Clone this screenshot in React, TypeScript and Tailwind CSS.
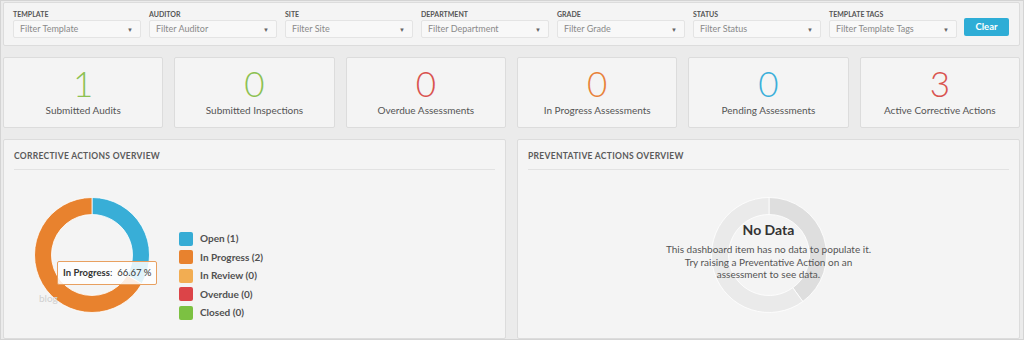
import React from 'react';

const filters = [
  { label: 'Template', placeholder: 'Filter Template' },
  { label: 'Auditor', placeholder: 'Filter Auditor' },
  { label: 'Site', placeholder: 'Filter Site' },
  { label: 'Department', placeholder: 'Filter Department' },
  { label: 'Grade', placeholder: 'Filter Grade' },
  { label: 'Status', placeholder: 'Filter Status' },
  { label: 'Template Tags', placeholder: 'Filter Template Tags' },
];

const stats = [
  { value: '1', label: 'Submitted Audits', color: 'text-[#8cc152]' },
  { value: '0', label: 'Submitted Inspections', color: 'text-[#8cc152]' },
  { value: '0', label: 'Overdue Assessments', color: 'text-[#d9534f]' },
  { value: '0', label: 'In Progress Assessments', color: 'text-[#e8823a]' },
  { value: '0', label: 'Pending Assessments', color: 'text-[#3bafda]' },
  { value: '3', label: 'Active Corrective Actions', color: 'text-[#d9534f]' },
];

const legend = [
  { label: 'Open (1)', color: 'bg-[#36acd5]' },
  { label: 'In Progress (2)', color: 'bg-[#e8822e]' },
  { label: 'In Review (0)', color: 'bg-[#f2ad52]' },
  { label: 'Overdue (0)', color: 'bg-[#dc4448]' },
  { label: 'Closed (0)', color: 'bg-[#7cc142]' },
];

// annular sector, angles in degrees clockwise from 12 o'clock
function sector(cx: number, cy: number, r0: number, r1: number, a0: number, a1: number) {
  const pt = (r: number, a: number) => {
    const rad = ((a - 90) * Math.PI) / 180;
    return `${(cx + r * Math.cos(rad)).toFixed(2)} ${(cy + r * Math.sin(rad)).toFixed(2)}`;
  };
  const large = a1 - a0 > 180 ? 1 : 0;
  return `M ${pt(r1, a0)} A ${r1} ${r1} 0 ${large} 1 ${pt(r1, a1)} L ${pt(r0, a1)} A ${r0} ${r0} 0 ${large} 0 ${pt(r0, a0)} Z`;
}

const Donut: React.FC<{ segments: Array<{ from: number; to: number; fill: string }> }> = ({ segments }) => (
  <svg width="118" height="118" viewBox="0 0 118 118">
    {segments.map((s, i) => (
      <path key={i} d={sector(59, 59, 40.5, 57.5, s.from, s.to)} fill={s.fill} stroke="#ffffff" strokeWidth="0.8" />
    ))}
  </svg>
);

const PanelTitle: React.FC<{ children: React.ReactNode }> = ({ children }) => (
  <div className="mx-[10px] border-b border-[#e2e2e2] pt-[12px] pb-[9px] text-[8.5px] font-bold uppercase leading-[8px] tracking-[0.3px] text-[#5a5a5a]">
    {children}
  </div>
);

export default function App() {
  return (
    <div className="box-border flex h-[340px] w-[1024px] flex-col gap-[11px] overflow-hidden border border-[#d4d4d4] bg-[#ebebeb] pt-[1px] pr-[3px] pl-[2px] font-['Lato','Liberation_Sans',sans-serif]">
      {/* filters */}
      <div className="flex h-[44px] shrink-0 items-start gap-[8px] rounded-[2px] border border-[#dcdcdc] bg-[#f4f4f4] pl-[9px]">
        {filters.map((f) => (
          <div key={f.label} className="flex w-[128px] flex-col pt-[7px]">
            <span className="text-[7px] font-bold uppercase leading-[8px] text-[#555]">{f.label}</span>
            <div className="mt-[2px] flex h-[18px] items-center justify-between rounded-[2px] border border-[#e4e4e4] bg-[#f8f8f8] pr-[7px] pl-[6px]">
              <span className="text-[9px] text-[#8a8a8a]">{f.placeholder}</span>
              <span className="text-[6px] text-[#666]">▼</span>
            </div>
          </div>
        ))}
        <button className="mt-[15px] -ml-[1px] flex h-[18px] w-[45px] items-center justify-center rounded-[2px] bg-[#2eadd6] text-[9.5px] font-bold text-white">
          Clear
        </button>
      </div>

      {/* stats */}
      <div className="grid h-[71px] shrink-0 grid-cols-6 gap-[11px]">
        {stats.map((s) => (
          <div key={s.label} className="flex flex-col items-center rounded-[2px] border border-[#dcdcdc] bg-[#f4f4f4]">
            <span className={`mt-[6px] text-[35px] leading-[38px] font-light ${s.color}`}>{s.value}</span>
            <span className="mt-[2px] text-[10px] leading-[12px] text-[#555]">{s.label}</span>
          </div>
        ))}
      </div>

      {/* overview panels */}
      <div className="grid h-[200px] shrink-0 grid-cols-2 gap-[11px]">
        <div className="flex flex-col rounded-[2px] border border-[#dcdcdc] bg-[#f4f4f4]">
          <PanelTitle>Corrective Actions Overview</PanelTitle>
          <div className="flex items-start">
            <div className="relative mt-[26px] ml-[29px]">
              <Donut
                segments={[
                  { from: 0, to: 120, fill: '#38aed7' },
                  { from: 120, to: 360, fill: '#e8822e' },
                ]}
              />
              <span className="absolute top-[95px] left-[6px] text-[10px] text-[#d0d0d0]">blog</span>
              <div className="absolute top-[65px] left-[24px] flex h-[24px] w-[100px] items-center rounded-[2px] border border-[#e8a060] bg-white/85 pl-[5px] text-[9.5px] whitespace-nowrap text-[#333]">
                <span className="font-bold">In Progress</span>
                <span>:&nbsp;&nbsp;66.67 %</span>
              </div>
            </div>
            <div className="mt-[61px] ml-[28px] flex flex-col gap-[3.5px]">
              {legend.map((l) => (
                <div key={l.label} className="flex items-center gap-[7px]">
                  <span className={`h-[14px] w-[14px] rounded-[2px] ${l.color}`} />
                  <span className="text-[10px] font-bold text-[#505050]">{l.label}</span>
                </div>
              ))}
            </div>
          </div>
        </div>

        <div className="flex flex-col rounded-[2px] border border-[#dcdcdc] bg-[#f4f4f4]">
          <PanelTitle>Preventative Actions Overview</PanelTitle>
          <div className="flex justify-center">
            <div className="relative mt-[26px] flex h-[118px] w-[220px] flex-col items-center">
              <div className="absolute top-0 left-[51px]">
                <Donut
                  segments={[
                    { from: 0, to: 144, fill: '#dedede' },
                    { from: 144, to: 360, fill: '#eaeaea' },
                  ]}
                />
              </div>
              <span className="relative mt-[26px] text-[14px] leading-[16px] font-bold text-[#333]">No Data</span>
              <p className="relative mt-[5px] text-center text-[10px] leading-[12.5px] text-[#555]">
                This dashboard item has no data to populate it.
                <br />
                Try raising a Preventative Action on an
                <br />
                assessment to see data.
              </p>
            </div>
          </div>
        </div>
      </div>
    </div>
  );
}
